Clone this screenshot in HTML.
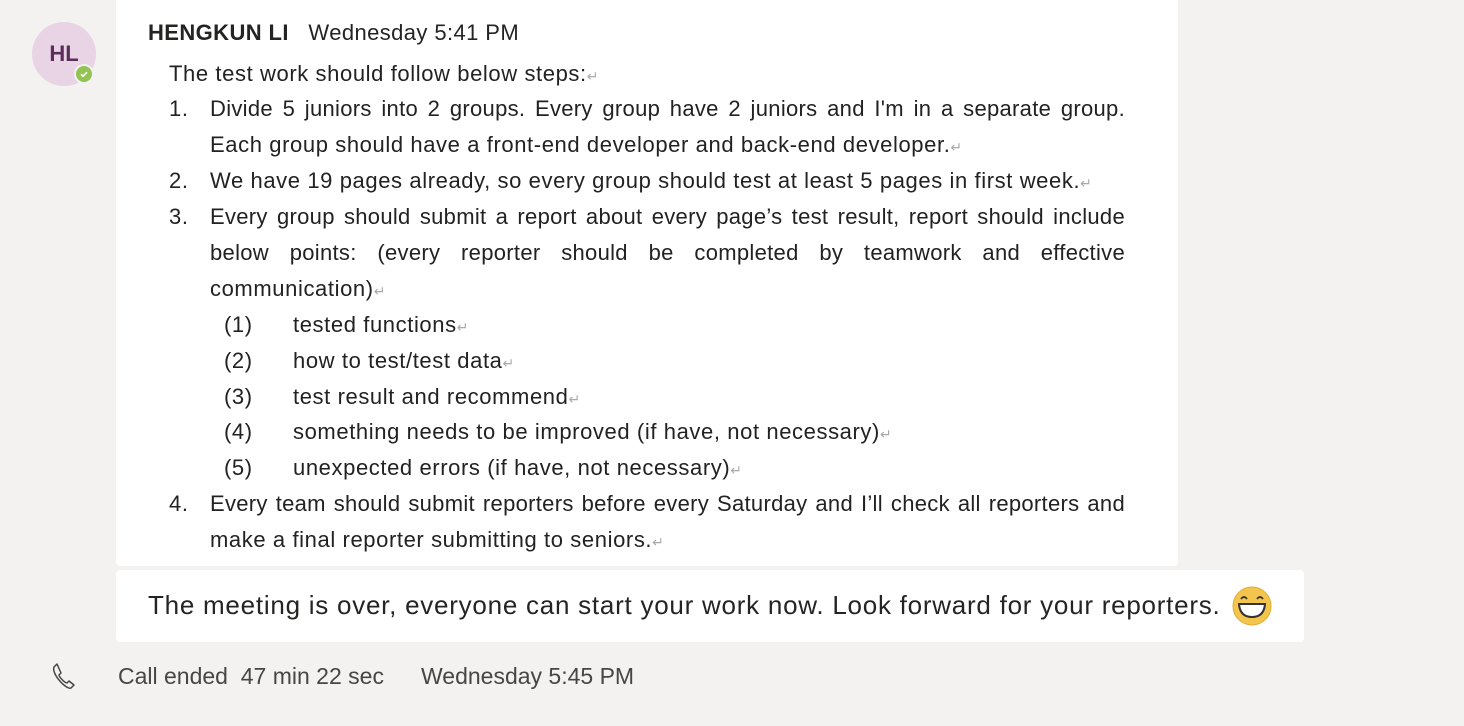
<!DOCTYPE html>
<html><head><meta charset="utf-8"><style>
html,body{margin:0;padding:0;}
body{width:1464px;height:726px;background:#f3f2f1;position:relative;overflow:hidden;font-family:"Liberation Sans",sans-serif;}
.card{position:absolute;background:#fff;border-radius:4px;}
.av{position:absolute;left:32px;top:22px;width:64px;height:64px;border-radius:50%;background:#e8d4e4;color:#5c2d5a;font-weight:bold;font-size:22px;line-height:64px;text-align:center;}
.st{position:absolute;left:74px;top:64px;width:20px;height:20px;border-radius:50%;background:#92c353;border:2px solid #f3f2f1;box-sizing:border-box;}
.hdr{position:absolute;left:148px;top:19px;font-size:22px;letter-spacing:0.4px;color:#252423;line-height:28px;white-space:nowrap;}
.hdr b{color:#252423;}
.l{position:absolute;font-size:22px;letter-spacing:0.6px;color:#222;line-height:36px;white-space:nowrap;}
.j{width:915px;text-align:justify;text-align-last:justify;white-space:normal;letter-spacing:0.3px;}
.r{color:#aaa;font-size:14px;letter-spacing:0;}
.msg{position:absolute;left:148px;top:587px;font-size:26px;letter-spacing:0.75px;color:#252423;line-height:36px;white-space:nowrap;}
.foot{position:absolute;top:660px;font-size:23px;color:#484644;line-height:32px;white-space:nowrap;}
</style></head><body>
<div class="card" style="left:116px;top:-4px;width:1062px;height:570px;"></div>
<div class="card" style="left:116px;top:570px;width:1188px;height:72px;"></div>
<div class="av">HL</div>
<div class="st"><svg width="16" height="16" viewBox="0 0 16 16" style="position:absolute;left:0;top:0"><path d="M5 8.2l2 2 4-4" stroke="#fff" stroke-width="1.6" fill="none"/></svg></div>
<div class="hdr"><b>HENGKUN LI</b>&nbsp;&nbsp;&nbsp;Wednesday 5:41 PM</div>

<div class="l" style="left:169px;top:56px">The test work should follow below steps:<span class="r">↵</span></div>
<div class="l" style="left:169px;top:91px">1.</div>
<div class="l j" style="left:210px;top:91px">Divide 5 juniors into 2 groups. Every group have 2 juniors and I'm in a separate group.</div>
<div class="l" style="left:210px;top:127px">Each group should have a front-end developer and back-end developer.<span class="r">↵</span></div>
<div class="l" style="left:169px;top:163px">2.</div>
<div class="l" style="left:210px;top:163px">We have 19 pages already, so every group should test at least 5 pages in first week.<span class="r">↵</span></div>
<div class="l" style="left:169px;top:199px">3.</div>
<div class="l j" style="left:210px;top:199px">Every group should submit a report about every page’s test result, report should include</div>
<div class="l j" style="left:210px;top:235px">below points: (every reporter should be completed by teamwork and effective</div>
<div class="l" style="left:210px;top:271px">communication)<span class="r">↵</span></div>
<div class="l" style="left:224px;top:307px">(1)</div><div class="l" style="left:293px;top:307px">tested functions<span class="r">↵</span></div>
<div class="l" style="left:224px;top:343px">(2)</div><div class="l" style="left:293px;top:343px">how to test/test data<span class="r">↵</span></div>
<div class="l" style="left:224px;top:379px">(3)</div><div class="l" style="left:293px;top:379px">test result and recommend<span class="r">↵</span></div>
<div class="l" style="left:224px;top:414px">(4)</div><div class="l" style="left:293px;top:414px">something needs to be improved (if have, not necessary)<span class="r">↵</span></div>
<div class="l" style="left:224px;top:450px">(5)</div><div class="l" style="left:293px;top:450px">unexpected errors (if have, not necessary)<span class="r">↵</span></div>
<div class="l" style="left:169px;top:486px">4.</div>
<div class="l j" style="left:210px;top:486px">Every team should submit reporters before every Saturday and I’ll check all reporters and</div>
<div class="l" style="left:210px;top:522px">make a final reporter submitting to seniors.<span class="r">↵</span></div>

<div class="msg">The meeting is over, everyone can start your work now. Look forward for your reporters.</div>
<svg style="position:absolute;left:1232px;top:586px" width="40" height="40" viewBox="0 0 40 40">
<circle cx="20" cy="20" r="19" fill="#f4c54c" stroke="#e3ab34" stroke-width="1"/>
<path d="M9 13q3-4 6 0M25 13q3-4 6 0" stroke="#333" stroke-width="1.8" fill="none"/>
<path d="M7 18h26q-1 13-13 13T7 18z" fill="#fff" stroke="#333" stroke-width="2"/>
</svg>

<svg style="position:absolute;left:51px;top:662px" width="26" height="28" viewBox="0 0 26 28"><path d="M6 2l-3 3c-1 2 0 7 5 13s10 9 12 8l3-3-5-4-2 2c-2 0-8-6-8-8l2-2z" stroke="#484644" stroke-width="1.5" fill="none" stroke-linejoin="round"/></svg>
<div class="foot" style="left:118px">Call ended&nbsp;&nbsp;47 min 22 sec</div>
<div class="foot" style="left:421px">Wednesday 5:45 PM</div>
</body></html>
